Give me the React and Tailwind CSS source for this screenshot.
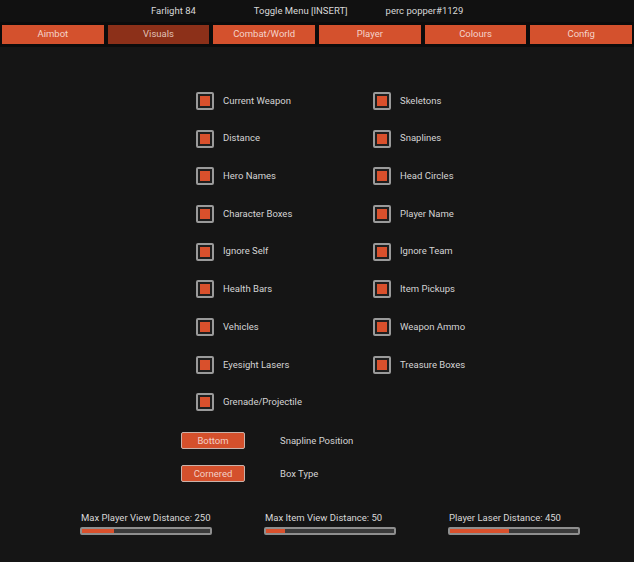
import React from "react";

const tabs = ["Aimbot", "Visuals", "Combat/World", "Player", "Colours", "Config"];
const left = ["Current Weapon", "Distance", "Hero Names", "Character Boxes", "Ignore Self", "Health Bars", "Vehicles", "Eyesight Lasers", "Grenade/Projectile"];
const right = ["Skeletons", "Snaplines", "Head Circles", "Player Name", "Ignore Team", "Item Pickups", "Weapon Ammo", "Treasure Boxes"];

function Check({ label }) {
  return (
    <div className="flex items-center h-[37.7px]">
      <div className="w-[18px] h-[18px] border-2 border-[#9a9a9a] rounded-[2px] bg-[#1e1e1e] flex items-center justify-center">
        <div className="w-[10px] h-[10px] bg-[#d9502c]" />
      </div>
      <span className="ml-[9px] text-[9.5px] text-[#d4d4d4]">{label}</span>
    </div>
  );
}

function Slider({ label, pct }) {
  return (
    <div className="w-[132px] flex flex-col">
      <span className="text-[9.5px] text-[#d8d8d8] ml-[1px] leading-[12px]">{label}</span>
      <div className="mt-[3px] h-[8px] border-2 border-[#8e8e8e] rounded-[2px] bg-[#3a3a3a] flex">
        <div className="h-full bg-[#d9502c]" style={{ width: pct + "%" }} />
      </div>
    </div>
  );
}

function Btn({ label }) {
  return (
    <div className="w-[64px] h-[17px] border border-[#c9b2aa] rounded-[2px] bg-[#d4502c] flex items-center justify-center text-[9.5px] text-[#f3cfc6]">
      {label}
    </div>
  );
}

export default function App() {
  return (
    <div className="w-[634px] h-[562px] bg-[#151515] flex flex-col" style={{ fontFamily: "Roboto, 'Liberation Sans', sans-serif" }}>
      <div className="h-[22px] bg-[#111111] flex items-center text-[9.5px] text-[#d8d8d8]">
        <span className="ml-[151px]">Farlight 84</span>
        <span className="ml-[58px]">Toggle Menu [INSERT]</span>
        <span className="ml-[38px]">perc popper#1129</span>
      </div>
      <div className="h-[25px] bg-[#0c0c0c] flex gap-[4px] px-[2px] pt-[3px] pb-[3px]">
        {tabs.map((t) => (
          <div
            key={t}
            className={
              "flex-1 basis-0 min-w-0 flex items-center justify-center text-[9.5px] " +
              (t === "Visuals"
                ? "bg-[#8c3019] text-[#e0c0b6]"
                : "bg-[#d4512d] text-[#f5d3ca]")
            }
          >
            {t}
          </div>
        ))}
      </div>
      <div className="mt-[35px] pl-[196px] flex">
        <div className="w-[177px] flex flex-col">
          {left.map((l) => (
            <Check key={l} label={l} />
          ))}
        </div>
        <div className="flex flex-col">
          {right.map((l) => (
            <Check key={l} label={l} />
          ))}
        </div>
      </div>
      <div className="pl-[181px] flex flex-col gap-[16px] mt-[11px]">
        <div className="flex items-center">
          <Btn label="Bottom" />
          <span className="ml-[35px] text-[9.5px] text-[#d4d4d4]">Snapline Position</span>
        </div>
        <div className="flex items-center">
          <Btn label="Cornered" />
          <span className="ml-[35px] text-[9.5px] text-[#d4d4d4]">Box Type</span>
        </div>
      </div>
      <div className="mt-[30px] pl-[80px] flex gap-[52px]">
        <Slider label="Max Player View Distance: 250" pct={25} />
        <Slider label="Max Item View Distance: 50" pct={15} />
        <Slider label="Player Laser Distance: 450" pct={46} />
      </div>
    </div>
  );
}
